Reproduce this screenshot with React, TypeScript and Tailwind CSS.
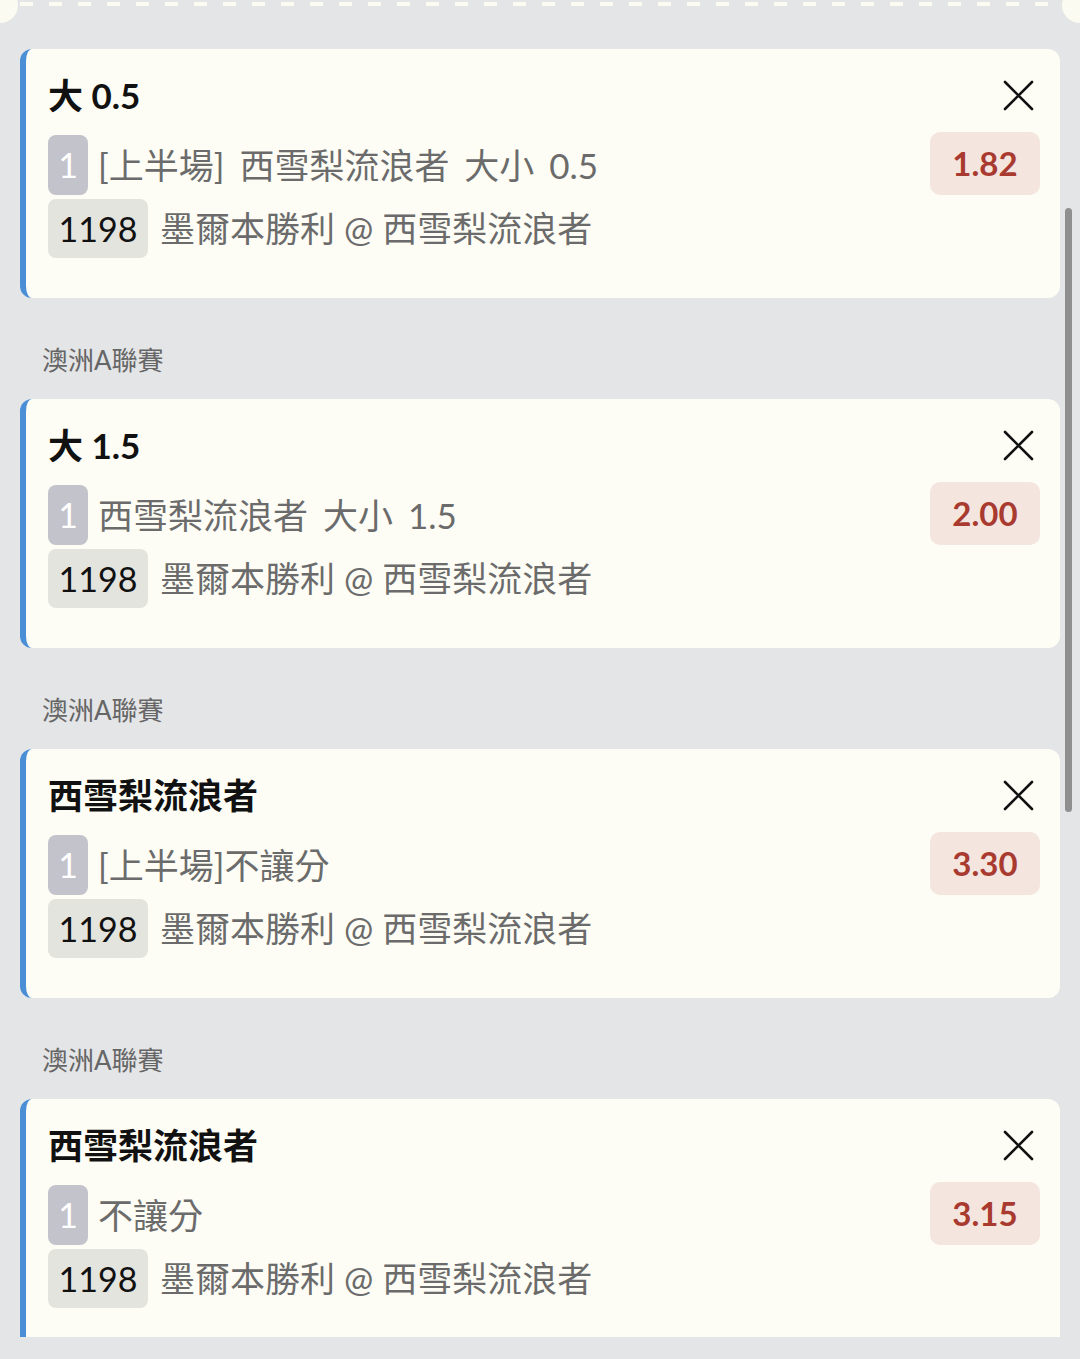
import React from "react";

type Bet = {
  title: string;
  market: string;
  odds: string;
  league?: string;
};

const bets: Bet[] = [
  { title: "大 0.5", market: "[上半場] 西雪梨流浪者 大小 0.5", odds: "1.82" },
  { title: "大 1.5", market: "西雪梨流浪者 大小 1.5", odds: "2.00", league: "澳洲A聯賽" },
  { title: "西雪梨流浪者", market: "[上半場]不讓分", odds: "3.30", league: "澳洲A聯賽" },
  { title: "西雪梨流浪者", market: "不讓分", odds: "3.15", league: "澳洲A聯賽" },
];

const font = { fontFamily: "Lato, 'Noto Sans CJK TC', 'Noto Sans', sans-serif" };

function CloseIcon() {
  return (
    <svg width="31" height="31" viewBox="0 0 31 31" fill="none">
      <path d="M2 2 L29 29 M29 2 L2 29" stroke="#111" strokeWidth="2.6" strokeLinecap="round" />
    </svg>
  );
}

function Card({ bet }: { bet: Bet }) {
  return (
    <div className="flex h-[249px] shrink-0 rounded-[12px] border-l-[6px] border-[#4a8fd6] bg-[#fdfdf5] pl-[22px] pr-[20px] pt-[21px]">
      <div className="flex flex-1 flex-col">
        <div className="flex h-[50px] items-center text-[35px] font-bold leading-none text-[#111]">
          {bet.title}
        </div>
        <div className="mt-[15px] flex h-[60px] items-center">
          <span className="flex h-[60px] w-[40px] items-center justify-center rounded-[8px] bg-[#c3c3cb] text-[34px] leading-none text-white">
            1
          </span>
          <span className="ml-[10px] text-[35px] leading-none text-[#6b6b6b] [word-spacing:6px]">{bet.market}</span>
        </div>
        <div className="mt-[4px] flex h-[59px] items-center">
          <span className="flex h-[59px] w-[100px] items-center justify-center rounded-[8px] bg-[#e4e4de] text-[34px] leading-none text-[#111]">
            1198
          </span>
          <span className="ml-[12px] text-[35px] leading-none text-[#6b6b6b]">墨爾本勝利 @ 西雪梨流浪者</span>
        </div>
      </div>
      <div className="flex flex-col items-end">
        <div className="flex h-[50px] w-[44px] items-center justify-center">
          <CloseIcon />
        </div>
        <div className="mt-[12px] flex h-[63px] w-[110px] items-center justify-center rounded-[10px] bg-[#f4e5df] text-[33px] font-bold leading-none text-[#a83a2f]">
          {bet.odds}
        </div>
      </div>
    </div>
  );
}

export default function App() {
  const dashes = Array.from({ length: 36 });
  return (
    <div className="relative h-[1359px] w-[1080px] overflow-hidden bg-[#e4e5e7]" style={font}>
      {/* top perforation */}
      <div className="absolute left-[-18px] top-[-13px] h-[36px] w-[36px] rounded-full bg-[#fbfbf1]" />
      <div className="absolute right-[-18px] top-[-13px] h-[36px] w-[36px] rounded-full bg-[#fbfbf1]" />
      <div className="absolute left-[20px] top-[2px] flex gap-[16px]">
        {dashes.map((_, i) => (
          <div key={i} className="h-[4px] w-[13px] bg-[#fbfbf1]" />
        ))}
      </div>

      <div className="flex h-[1337px] flex-col overflow-hidden px-[20px] pt-[49px]">
        {bets.map((bet, i) => (
          <React.Fragment key={i}>
            {bet.league && (
              <div className="flex h-[101px] shrink-0 items-center pl-[22px] pt-[22px] text-[26px] leading-none text-[#666]">
                {bet.league}
              </div>
            )}
            <Card bet={bet} />
          </React.Fragment>
        ))}
      </div>

      {/* overlay scrollbar */}
      <div className="absolute left-[1065px] top-[208px] h-[604px] w-[7px] rounded-full bg-[#8f8f8f]" />
    </div>
  );
}
